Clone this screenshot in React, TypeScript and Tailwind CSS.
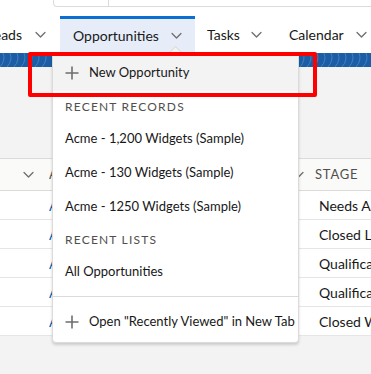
import React from "react";

function Chevron({ className = "" }: { className?: string }) {
  return (
    <svg className={className} width="13" height="13" viewBox="0 0 16 16" fill="none">
      <path d="M2.5 5.5L8 11l5.5-5.5" stroke="#706e6b" strokeWidth="1.6" strokeLinecap="round" strokeLinejoin="round" />
    </svg>
  );
}

function Plus() {
  return (
    <svg width="14" height="14" viewBox="0 0 14 14" fill="none">
      <path d="M7 0.5v13M0.5 7h13" stroke="#706e6b" strokeWidth="1.6" />
    </svg>
  );
}

const stages = ["Needs Analysis", "Closed Lost", "Qualification", "Qualification", "Closed Won"];

export default function App() {
  return (
    <div className="relative w-[371px] h-[374px] overflow-hidden bg-[#f3f3f3] text-[#181818] font-['Lato','Open_Sans',sans-serif]">
      {/* header with search box */}
      <div className="h-[16px] bg-white">
        <div className="ml-[53px] h-[7px] flex border-l border-b border-[#dddbda] rounded-bl-[4px]">
          <div className="w-[55px] border-r border-[#dddbda]" />
        </div>
      </div>

      {/* nav tabs */}
      <div className="h-[37px] bg-white flex items-center text-[14px] text-[#181818]">
        <div className="flex items-center justify-end h-full w-[60px] shrink-0 pr-[13px] overflow-hidden">
          <span>Leads</span>
          <Chevron className="ml-[12px] shrink-0" />
        </div>
        <div className="flex items-center justify-between h-full w-[135px] shrink-0 pl-[13px] pr-[12px] bg-[#e6edf8] border-t-[3px] border-[#0b6fd1] pb-[1px]">
          <span>Opportunities</span>
          <Chevron />
        </div>
        <div className="flex items-center justify-between h-full w-[82px] shrink-0 pl-[12px] pr-[14px]">
          <span>Tasks</span>
          <Chevron />
        </div>
        <div className="flex items-center justify-between h-full w-[94px] shrink-0 pl-[12px] pr-[3px]">
          <span>Calendar</span>
          <Chevron />
        </div>
      </div>

      {/* blue band */}
      <div className="h-[14px] bg-[#1c5ea6] overflow-hidden">
        <svg width="371" height="14" viewBox="0 0 371 14">
          {[0, 7, 14, 21, 28, 35, 42, 300, 307, 314, 321, 328, 335, 342, 349, 356, 363].map((x) => (
            <path key={x} d={`M${x} 14 Q${x + 6} 7 ${x + 3} 0`} stroke="#4f86c4" strokeWidth="0.8" fill="none" />
          ))}
        </svg>
      </div>

      {/* gray space */}
      <div className="h-[91px]" />

      {/* table */}
      <div className="bg-white border-t border-[#dddbda]">
        <div className="h-[32px] flex items-center bg-[#fafaf9] border-b border-[#dddbda] text-[13px] text-[#514f4d] tracking-[0.06em]">
          <Chevron className="ml-[22px] shrink-0" />
          <div className="ml-[14px] w-[3px] shrink-0 overflow-hidden whitespace-nowrap">ACCOUNT NAME</div>
          <div className="w-[244px] shrink-0" />
          <Chevron className="shrink-0 -ml-[4px]" />
          <span className="ml-[10px] shrink-0">STAGE</span>
        </div>
        {stages.map((s, i) => (
          <div key={i} className="h-[29px] flex items-center border-b border-[#e5e5e5] text-[14px]">
            <div className="ml-[49px] w-[3px] shrink-0 overflow-hidden text-[#0b5cab]">Acme</div>
            <div className="w-[267px] shrink-0" />
            <span className="whitespace-nowrap shrink-0">{s}</span>
          </div>
        ))}
      </div>

      {/* dropdown menu */}
      <div className="absolute left-[52px] top-[53px] w-[247px] h-[290px] bg-white border border-[#dddbda] rounded-b-[4px] shadow-[0_2px_3px_rgba(0,0,0,0.16)] text-[13px]">
        <div className="absolute -top-[6px] left-[117px] w-[11px] h-[11px] rotate-45 bg-[#f3f3f3] border-l border-t border-[#dddbda]" />
        <div className="relative h-[37px] flex items-center bg-[#f3f3f3] pl-[12px]">
          <Plus />
          <span className="ml-[10px] text-[#181818]">New Opportunity</span>
        </div>
        <div className="h-[31px] flex items-center pl-[12px] text-[12px] tracking-[0.1em] text-[#514f4d]">RECENT RECORDS</div>
        <div className="h-[34px] flex items-center pl-[12px]">Acme - 1,200 Widgets (Sample)</div>
        <div className="h-[34px] flex items-center pl-[12px]">Acme - 130 Widgets (Sample)</div>
        <div className="h-[34px] flex items-center pl-[12px]">Acme - 1250 Widgets (Sample)</div>
        <div className="h-[31px] flex items-center pl-[12px] text-[12px] tracking-[0.1em] text-[#514f4d]">RECENT LISTS</div>
        <div className="h-[34px] flex items-center pl-[12px]">All Opportunities</div>
        <div className="h-[8px] border-b border-[#dddbda]" />
        <div className="h-[46px] flex items-center pl-[12px] pt-[4px]">
          <Plus />
          <span className="ml-[10px]">Open "Recently Viewed" in New Tab</span>
        </div>
      </div>

      {/* highlight box */}
      <div className="absolute left-[28px] top-[52px] w-[289px] h-[45px] border-4 border-[#ff0000] rounded-[2px]" />
    </div>
  );
}
